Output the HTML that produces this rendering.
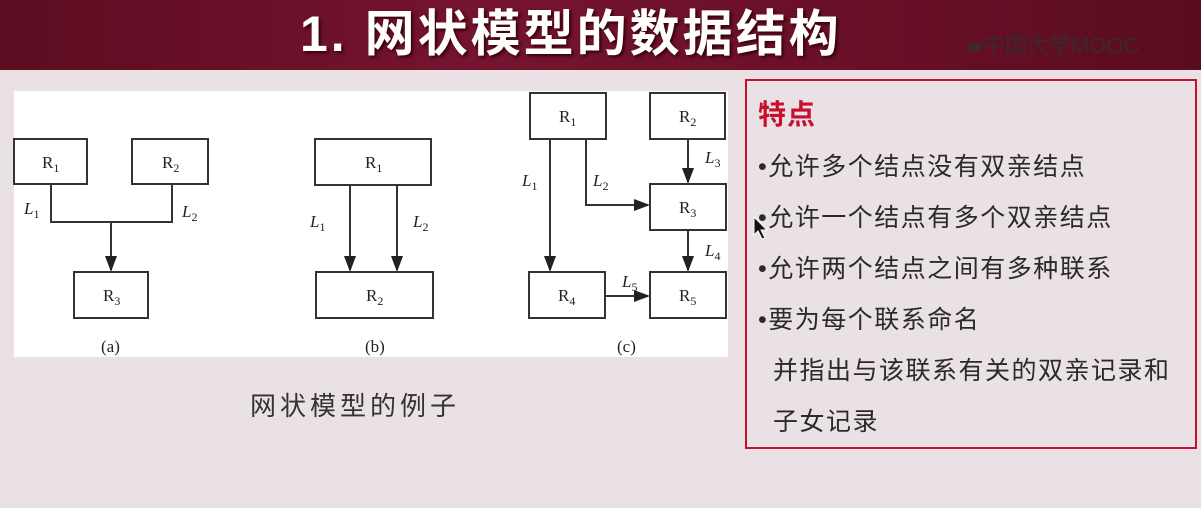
<!DOCTYPE html>
<html><head><meta charset="utf-8"><style>
body{margin:0;width:1201px;height:508px;overflow:hidden;background:#e9e1e3;font-family:"Liberation Sans","Noto Sans CJK SC",sans-serif;position:relative}
.hdr{position:absolute;left:0;top:0;width:1201px;height:70px;background:linear-gradient(90deg,#5c0c20,#761430 40%,#6a1028 70%,#5a0c1e)}
.title{position:absolute;left:300px;top:-6px;color:#fff;font-size:50px;letter-spacing:3px;font-weight:bold;white-space:nowrap;text-shadow:2px 2px 3px #300}
.mooc{position:absolute;left:966px;top:28px;font-size:22px;color:#3a2a2e;white-space:nowrap}
.white{position:absolute;left:14px;top:91px;width:714px;height:266px;background:#fff}
.cap{position:absolute;left:250px;top:386px;font-size:26px;letter-spacing:4px;color:#333}
.rb{position:absolute;left:745px;top:79px;width:448px;height:366px;border:2px solid #c8102e}
.t{position:absolute;left:758px;font-size:25px;letter-spacing:1.5px;color:#2a2a2a;white-space:nowrap}
</style></head><body>
<div class="hdr"></div>
<div class="title">1. 网状模型的数据结构</div>
<div class="mooc">▰中国大学MOOC</div>
<div class="white"></div>
<svg style="position:absolute;left:0;top:0" width="740" height="370" font-family="Liberation Serif,serif" font-size="17">
<defs><marker id="a" markerWidth="8" markerHeight="8" refX="7" refY="4" orient="auto"><path d="M0,1 L8,4 L0,7z" fill="#222"/></marker></defs>
<g fill="none" stroke="#333" stroke-width="2">
<rect x="14" y="139" width="73" height="45"/><rect x="132" y="139" width="76" height="45"/><rect x="74" y="272" width="74" height="46"/>
<rect x="315" y="139" width="116" height="46"/><rect x="316" y="272" width="117" height="46"/>
<rect x="530" y="93" width="76" height="46"/><rect x="650" y="93" width="75" height="46"/><rect x="650" y="184" width="76" height="46"/><rect x="529" y="272" width="76" height="46"/><rect x="650" y="272" width="76" height="46"/>
<path d="M51,184V222H172V184"/>
<path d="M111,222V270" marker-end="url(#a)"/>
<path d="M350,185V270" marker-end="url(#a)"/><path d="M397,185V270" marker-end="url(#a)"/>
<path d="M550,139V270" marker-end="url(#a)"/>
<path d="M586,139V205H648" marker-end="url(#a)"/>
<path d="M688,139V182" marker-end="url(#a)"/><path d="M688,230V270" marker-end="url(#a)"/>
<path d="M605,296H648" marker-end="url(#a)"/>
</g>
<g fill="#222">
<text x="42" y="168">R<tspan font-size="12" dy="4">1</tspan></text>
<text x="162" y="168">R<tspan font-size="12" dy="4">2</tspan></text>
<text x="103" y="301">R<tspan font-size="12" dy="4">3</tspan></text>
<text x="365" y="168">R<tspan font-size="12" dy="4">1</tspan></text>
<text x="366" y="301">R<tspan font-size="12" dy="4">2</tspan></text>
<text x="559" y="122">R<tspan font-size="12" dy="4">1</tspan></text>
<text x="679" y="122">R<tspan font-size="12" dy="4">2</tspan></text>
<text x="679" y="213">R<tspan font-size="12" dy="4">3</tspan></text>
<text x="558" y="301">R<tspan font-size="12" dy="4">4</tspan></text>
<text x="679" y="301">R<tspan font-size="12" dy="4">5</tspan></text>
<g font-style="italic"><text x="24" y="214">L<tspan font-size="12" font-style="normal" dy="4">1</tspan></text>
<text x="182" y="217">L<tspan font-size="12" font-style="normal" dy="4">2</tspan></text>
<text x="310" y="227">L<tspan font-size="12" font-style="normal" dy="4">1</tspan></text>
<text x="413" y="227">L<tspan font-size="12" font-style="normal" dy="4">2</tspan></text>
<text x="522" y="186">L<tspan font-size="12" font-style="normal" dy="4">1</tspan></text>
<text x="593" y="186">L<tspan font-size="12" font-style="normal" dy="4">2</tspan></text>
<text x="705" y="163">L<tspan font-size="12" font-style="normal" dy="4">3</tspan></text>
<text x="705" y="256">L<tspan font-size="12" font-style="normal" dy="4">4</tspan></text>
<text x="622" y="287">L<tspan font-size="12" font-style="normal" dy="4">5</tspan></text></g>
<text x="101" y="352">(a)</text><text x="365" y="352">(b)</text><text x="617" y="352">(c)</text>
</g></svg>
<div class="cap">网状模型的例子</div>
<div class="rb"></div>
<div class="t" style="top:93px;color:#c8102e;font-weight:bold;font-size:28px;letter-spacing:1px">特点</div>
<div class="t" style="top:147px">•允许多个结点没有双亲结点</div>
<div class="t" style="top:198px">•允许一个结点有多个双亲结点</div>
<div class="t" style="top:249px">•允许两个结点之间有多种联系</div>
<div class="t" style="top:300px">•要为每个联系命名</div>
<div class="t" style="top:351px;left:773px">并指出与该联系有关的双亲记录和</div>
<div class="t" style="top:402px;left:773px">子女记录</div>
<svg style="position:absolute;left:753px;top:216px" width="16" height="24"><path d="M1,1 L1,19 L5,15 L9,23 L12,22 L8,14 L14,14z" fill="#111" stroke="#fff" stroke-width="1"/></svg>
</body></html>
